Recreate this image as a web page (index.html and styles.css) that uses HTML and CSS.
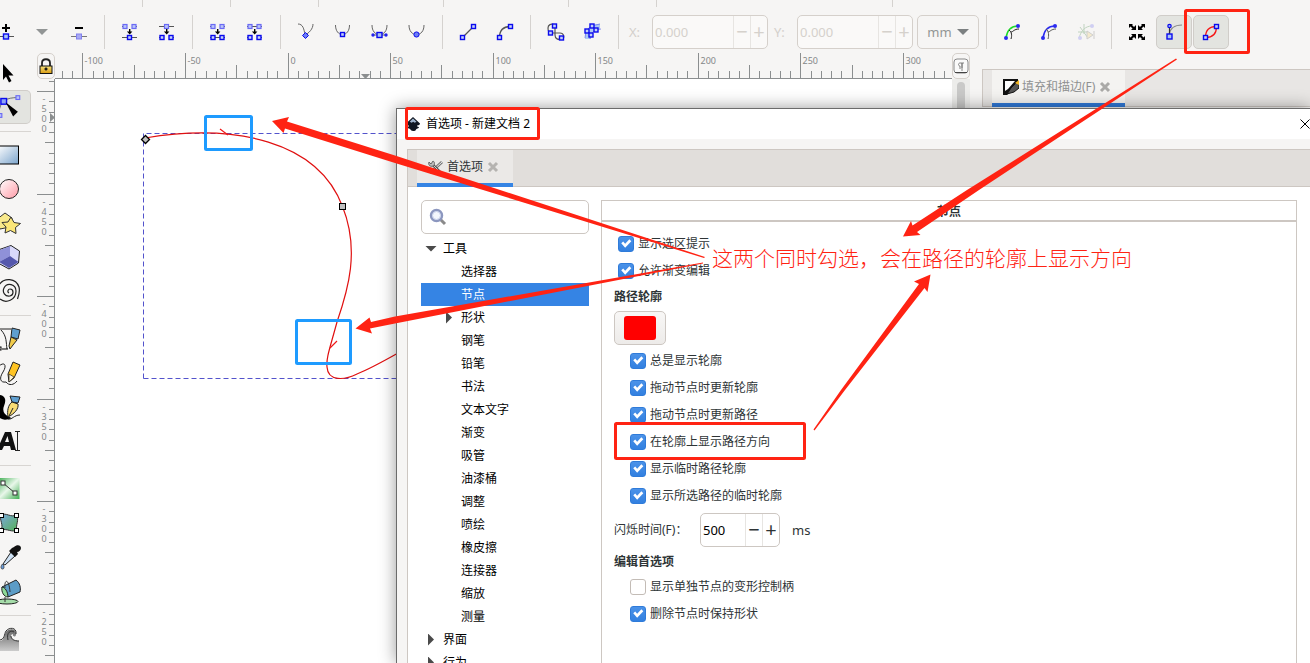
FILE: index.html
```
<!DOCTYPE html>
<html lang="zh-CN">
<head>
<meta charset="utf-8">
<title>首选项 - 新建文档 2</title>
<link rel="stylesheet" href="styles.css">
</head>
<body>
<svg class="symbols" aria-hidden="true">
  <defs>
    <g id="node"><rect x="-2" y="-2" width="4" height="4" fill="#c3d1f5" stroke="#0a0aee" stroke-width="1.4"/></g>
    <g id="node-big"><rect x="-2.5" y="-2.5" width="5" height="5" fill="#a9c3f5" stroke="#0a0aee" stroke-width="1.4"/></g>
    <g id="node-soft"><rect x="-2" y="-2" width="4" height="4" fill="#b9c4f7" stroke="#6a6af5" stroke-width="1.2"/></g>
    <g id="down"><path d="M-.5 -3h1.4v2.500h2L.2 2.600-2.600 -.5h2.100z" fill="#000"/></g>
    <linearGradient id="blue-fill" x2="1" y2="1"><stop stop-color="#fff"/><stop offset="1" stop-color="#7ba4cc"/></linearGradient>
    <linearGradient id="pink-fill" x2="1" y2="1"><stop stop-color="#fff"/><stop offset="1" stop-color="#ff9aa6"/></linearGradient>
    <linearGradient id="green-fill" x2="1" y2="1"><stop stop-color="#3fae52"/><stop offset=".5" stop-color="#e9f7ea"/><stop offset="1" stop-color="#3fae52"/></linearGradient>
    <linearGradient id="mesh-fill" x2="1" y2="1"><stop stop-color="#7aa7dc"/><stop offset="1" stop-color="#56b257"/></linearGradient>
    <linearGradient id="wave-fill" x2="0" y2="1"><stop stop-color="#666"/><stop offset="1" stop-color="#ccc"/></linearGradient>
    <linearGradient id="gold-fill" x2="0" y2="1"><stop stop-color="#f7e27c"/><stop offset="1" stop-color="#d89a10"/></linearGradient>
  </defs>
</svg>

<main class="app">
  <svg class="strip" aria-hidden="true"><path d="M142.500 0V7M230.500 0V7M318.500 0V7M443.500 0V7M568.500 0V7M656.500 0V7M892.500 0V7" stroke="#d5d2cf"/></svg>

  <div class="toolbar">
    <button class="tool" aria-label="插入节点"><svg viewBox="0 0 24 24"><path d="M9 8h8M13 4v8" stroke="#000" stroke-width="2"/><path d="M4 16.500h17" stroke="#555"/><use href="#node-big" x="13" y="16.500"/></svg></button>
    <button class="tool" aria-label="更多"><svg viewBox="0 0 24 24"><path d="M6 9h12l-6 6z" fill="#929595"/></svg></button>
    <button class="tool" aria-label="删除节点"><svg viewBox="0 0 24 24"><path d="M8 8h8" stroke="#000" stroke-width="2"/><path d="M4 16.500h16" stroke="#777"/><rect x="9.500" y="14" width="5" height="5" fill="#a9a9f3" stroke="#8181ef"/></svg></button>
    <i class="sep"></i>
    <button class="tool" aria-label="连接节点"><svg viewBox="0 0 24 24"><path d="M4 6.500h2M18 6.500h1M4 17.500h15" stroke="#555"/><use href="#node-soft" x="7" y="6.500"/><use href="#node-soft" x="16" y="6.500"/><use href="#down" x="11.500" y="12"/><use href="#node" x="11.500" y="17.500"/></svg></button>
    <button class="tool" aria-label="断开节点"><svg viewBox="0 0 24 24"><path d="M4 6.500h15M4 17.500h2M17 17.500h2" stroke="#555"/><use href="#node-soft" x="11.500" y="6.500"/><use href="#down" x="11.500" y="12"/><use href="#node" x="7" y="17.500"/><use href="#node" x="16" y="17.500"/></svg></button>
    <i class="sep"></i>
    <button class="tool" aria-label="用线段连接"><svg viewBox="0 0 24 24"><path d="M4 6.500h2M18 6.500h1M4 17.500h15" stroke="#555"/><use href="#node-soft" x="7" y="6.500"/><use href="#node-soft" x="16" y="6.500"/><use href="#down" x="11.500" y="12"/><use href="#node" x="7" y="17.500"/><use href="#node" x="16" y="17.500"/></svg></button>
    <button class="tool" aria-label="删除线段"><svg viewBox="0 0 24 24"><path d="M4 6.500h15M4 17.500h2M17 17.500h2" stroke="#555"/><use href="#node-soft" x="7" y="6.500"/><use href="#node-soft" x="16" y="6.500"/><use href="#down" x="11.500" y="12"/><use href="#node" x="7" y="17.500"/><use href="#node" x="16" y="17.500"/></svg></button>
    <i class="sep"></i>
    <button class="tool" aria-label="尖锐节点"><svg viewBox="0 0 24 24"><path d="M4 4c5 0 6 5 7 11 4-2 8-6 8-11" fill="none" stroke="#666"/><path d="M11.500 12.500l3 3-3 3-3-3z" fill="#6d7ff5" stroke="#0a0aee"/></svg></button>
    <button class="tool" aria-label="平滑节点"><svg viewBox="0 0 24 24"><path d="M4.500 5c0 6 3 9.500 7 9.500s7-3.500 7-9.500" fill="none" stroke="#666"/><use href="#node" x="11.500" y="14.500"/></svg></button>
    <button class="tool" aria-label="对称节点"><svg viewBox="0 0 24 24"><path d="M4 5c0 6 3 9.500 7.500 9.500S19 11 19 5M5 15h13" fill="none" stroke="#666"/><circle cx="5" cy="15" r="1.700" fill="#2222ee"/><circle cx="18" cy="15" r="1.700" fill="#2222ee"/><use href="#node-big" x="11.500" y="15"/></svg></button>
    <button class="tool" aria-label="自动平滑"><svg viewBox="0 0 24 24"><path d="M4 5c0 6 3 9.500 7.500 9.500S19 11 19 5" fill="none" stroke="#666"/><circle cx="11.500" cy="14.500" r="2.600" fill="#6d7ff5" stroke="#0a0aee"/></svg></button>
    <i class="sep"></i>
    <button class="tool" aria-label="直线段"><svg viewBox="0 0 24 24"><path d="M6.500 17.500l11-11" stroke="#555" stroke-width="1.300"/><use href="#node" x="6.500" y="17.500"/><use href="#node" x="17.500" y="6.500"/></svg></button>
    <button class="tool" aria-label="曲线段"><svg viewBox="0 0 24 24"><path d="M6.500 17.500c0-7 4-11 11-11" fill="none" stroke="#555" stroke-width="1.300"/><use href="#node" x="6.500" y="17.500"/><use href="#node" x="17.500" y="6.500"/></svg></button>
    <i class="sep"></i>
    <button class="tool" aria-label="对象转路径"><svg viewBox="0 0 24 24"><path d="M10.500 5C7 3 4 5 4 8c0 3 1 5 3 5h9c4 0 5 5 2 6-4 1-7 0-7-4V6" fill="none" stroke="#555" stroke-width="1.200"/><use href="#node" x="10.500" y="6"/><use href="#node" x="6.500" y="13"/><use href="#node" x="17.500" y="18"/></svg></button>
    <button class="tool" aria-label="描边转路径"><svg viewBox="0 0 24 24"><path d="M4 19C4 8 9 4 19 4v5c-6 0-9 4-9 10z" fill="#aec9f2"/><path d="M4 18l1-7 5-5 9-2M9 19v-4l5-5 6-1" fill="none" stroke="#6c77ee" stroke-width=".8"/><use href="#node" x="6" y="11"/><use href="#node" x="11" y="6"/><use href="#node" x="15" y="10"/><use href="#node" x="10" y="15"/></svg></button>
    <i class="sep"></i>
    <div class="coord"><label for="cx">X:</label><span class="entry"><input id="cx" value="0.000" disabled><button disabled aria-label="减少">−</button><button disabled aria-label="增加">+</button></span></div>
    <div class="coord"><label for="cy">Y:</label><span class="entry"><input id="cy" value="0.000" disabled><button disabled aria-label="减少">−</button><button disabled aria-label="增加">+</button></span></div>
    <button class="unit">mm<svg viewBox="0 0 12 7"><path d="M0 0h12L6 6z" fill="#7c8081"/></svg></button>
    <i class="sep"></i>
    <button class="tool" aria-label="下一个路径效果参数"><svg viewBox="0 0 24 24"><path d="M6 18C7 11 11 6 18 6" fill="none" stroke="#1edb2b" stroke-width="1.600"/><path d="M9 10c3 2 3 6 2 9M11 12c2 0 3-3 8-3" fill="none" stroke="#222"/><circle cx="6" cy="18" r="2" fill="#2b2bf0"/><circle cx="18" cy="6" r="2" fill="#2b2bf0"/></svg></button>
    <button class="tool" aria-label="编辑剪裁路径"><svg viewBox="0 0 24 24"><path d="M6 18C7 11 11 6 18 6" fill="none" stroke="#2b2bf0" stroke-width="1.600"/><path d="M9 9c3 2 3 7 2 10M11 12c2 0 3-3 8-3" fill="none" stroke="#555"/><circle cx="6" cy="18" r="2" fill="#2b2bf0"/><circle cx="18" cy="6" r="2" fill="#2b2bf0"/></svg></button>
    <button class="tool faded" aria-label="编辑蒙版"><svg viewBox="0 0 24 24"><path d="M5 18C7 11 11 6 18 6M6 7l8 11M10 4v10M4 12h10" fill="none" stroke="#4a8a4a"/><path d="M13 11l6 4-6 4z" fill="#f0d47a" stroke="#777"/><path d="M20 11v8" stroke="#777"/><circle cx="6" cy="18" r="2" fill="#7b7bf0"/><circle cx="18" cy="6" r="2" fill="#7b7bf0"/></svg></button>
    <i class="sep"></i>
    <button class="tool" aria-label="显示变换控制柄"><svg viewBox="0 0 24 24"><path d="M4 4h4L7 5l2 2 2-2v5H6l1.500-1.500-2-2L4 8zM20 4v4l-1.500-1.500-2 2L18 10h-5V5l2 2 2-2-1-1zM4 20v-4l1.500 1.500 2-2L6 14h5v5l-2-2-2 2 1 1zM20 20h-4l1-1-2-2-2 2v-5h5l-1.500 1.500 2 2L20 16z"/></svg></button>
    <button class="tool pressed" aria-label="显示贝塞尔手柄"><svg viewBox="0 0 24 24"><path d="M7 15C8 8 13 5 20 5" fill="none" stroke="#888" stroke-width="1.200"/><path d="M7.500 14V6" stroke="#333" stroke-width="1.200"/><circle cx="7.500" cy="6" r="1.700" fill="#9db4f7" stroke="#0a0aee" stroke-width="1.200"/><use href="#node-big" x="7.500" y="16.500"/></svg></button>
    <button class="tool pressed" aria-label="显示路径轮廓"><svg viewBox="0 0 24 24"><path d="M6.500 17.500C6.500 10 10 6.500 17.500 6.500 17.500 14 14 17.500 6.500 17.500z" fill="none" stroke="#f51414" stroke-width="1.300"/><use href="#node" x="6.500" y="17.500"/><use href="#node" x="17.500" y="6.500"/></svg></button>
  </div>

  <div class="workspace">
    <nav class="toolbox" aria-label="工具箱">
      <button aria-label="选择器"><svg viewBox="0 0 31 34"><path d="M3 8v16l3-3.500 3 6 2.500-1.500-3-5.500h5z" fill="#000"/></svg></button>
      <button class="active" aria-label="节点"><svg viewBox="0 0 31 34"><path d="M-2 23C-1 10 6 7 18 7" fill="none" stroke="#666"/><rect x="0" y="8" width="6" height="6" fill="#8ea5f5" stroke="#0a0aee" stroke-width="1.500"/><use href="#node-soft" x="18" y="7"/><use href="#node-soft" x="-1" y="26"/><path d="M5 12l13 10-5 5z" fill="#000"/></svg></button>
      <i></i>
      <button aria-label="矩形"><svg viewBox="0 0 31 34"><rect x="-3" y="8" width="21.500" height="18" fill="url(#blue-fill)" stroke="#000"/></svg></button>
      <button aria-label="椭圆"><svg viewBox="0 0 31 34"><circle cx="9" cy="17" r="9.500" fill="url(#pink-fill)" stroke="#222"/></svg></button>
      <button aria-label="星形"><svg viewBox="0 0 31 34"><path d="M5 7l7 5-2 9-10 2-4-9z" fill="#f8e98c" stroke="#333"/><path d="M11 11l3 5.500 6.500 1-5 4 .5 6-5.500-3-5.500 2.500 1-6-4-4.500 6-.5z" fill="#fbe678" stroke="#333"/></svg></button>
      <button aria-label="3D 立方体"><svg viewBox="0 0 31 34"><path d="M11 5.500l8.500 5.500-1 12-9.500 6-11-6V10z" fill="#d9d9fa" stroke="#222"/><path d="M0 10l10-4v10L-1 22z" fill="#8f91d8"/><path d="M10 16l8.500 6-9.500 6-10-6z" fill="#5558ac"/></svg></button>
      <button aria-label="螺旋"><svg viewBox="0 0 31 34"><path d="M9 19c-2-1-1-4 1-4 4 0 4 6 0 7-5 1-8-4-6-8 3-6 12-4 12 3 0 9-10 13-16 8M-1 11c5-8 17-7 20 2 1 4 0 8-1.500 12" fill="none" stroke="#222" stroke-width="1.200"/></svg></button>
      <i></i>
      <button aria-label="钢笔"><svg viewBox="0 0 31 34"><path d="M-1 7h12M1 8c6 6 5 13 6 19" fill="none" stroke="#222"/><rect x="-2" y="25" width="3" height="3" fill="#fff" stroke="#000"/><path d="M2 27h6" stroke="#000"/><path d="M12 6l8 2-2 9-7-2z" fill="#5f9fd0" stroke="#222"/><path d="M11 15l6 3-4 5-3 4-1-3z" fill="#f1cb4b" stroke="#222"/></svg></button>
      <button aria-label="铅笔"><svg viewBox="0 0 31 34"><path d="M-1 10c6-5 8 0 4 6s-3 11 3 10c3 4 8 3 11-1" fill="none" stroke="#222"/><path d="M13 6l7 3-6 13-5 4-1-8z" fill="#ffc423" stroke="#222"/><path d="M9 18l5 3-5 5z" fill="#fff3d1" stroke="#222" stroke-width=".7"/></svg></button>
      <button aria-label="书法"><svg viewBox="0 0 31 34"><path d="M0 6c5 1 5 5 3 10s0 9 6 12C2 30-1 27-1 23z" stroke="#000" stroke-width="2"/><path d="M10 6l10 1-2 6-6-1z" fill="#5f9fd0" stroke="#222"/><path d="M12 12l6 2c1 5-4 10-10 13-1-6 0-12 4-15z" fill="#f9dc74" stroke="#222"/><path d="M13 18l-4 8" stroke="#222"/><path d="M8 29c4 1 6-4 12-4" fill="none" stroke="#222"/></svg></button>
      <button aria-label="文本"><svg viewBox="0 0 31 34"><path d="M-3 26L5 8h6l5 18h-5l-1-4H4l-2 4zM5 18h4L7.500 12z" fill="#111" fill-rule="evenodd"/><path d="M15 7.500h5M15 26.500h5M17.500 8v18" stroke="#222"/></svg></button>
      <i></i>
      <button aria-label="渐变"><svg viewBox="0 0 31 34"><rect x="-2" y="6" width="21.500" height="21" fill="url(#green-fill)"/><path d="M3 11l12 10" stroke="#333"/><rect x="1" y="9" width="4" height="4" fill="#fff" stroke="#333"/><rect x="13" y="19" width="4" height="4" fill="#fff" stroke="#333"/></svg></button>
      <button aria-label="网格"><svg viewBox="0 0 31 34"><path d="M1 9c5-3 10 3 15 0 4 5-1 10 1 15-5 3-10-2-16 0 3-5-2-10 0-15z" fill="url(#mesh-fill)" stroke="#333"/><g fill="#fff" stroke="#000"><rect x="-.5" y="7.500" width="4" height="4"/><rect x="14.500" y="7.500" width="4" height="4"/><rect x="-.5" y="22.500" width="4" height="4"/><rect x="14.500" y="22.500" width="4" height="4"/></g></svg></button>
      <button aria-label="吸管"><svg viewBox="0 0 31 34"><path d="M11 12l4 4L5 25l-2-1z" fill="#cfe2f5" stroke="#222"/><path d="M14 7c3-3 7-2 7 1 0 2-2 4-4 4l1 2-3 3-6-6 3-3z" fill="#111"/><path d="M2.500 24c2 2 2 5 0 5s-2-3 0-5z" fill="#6b9edb" stroke="#222" stroke-width=".7"/></svg></button>
      <button aria-label="油漆桶"><svg viewBox="0 0 31 34"><ellipse cx="7" cy="27.500" rx="11" ry="2.500" fill="#a5dca9" stroke="#222"/><path d="M2 13l14-7c4 3 5 8 4 12L8 23c-3-3-5-6-6-10z" fill="#5c9cc6" stroke="#222"/><path d="M2 13c3 0 6 5 6 10-4 0-7-5-6-10z" fill="#8ed897" stroke="#222"/><path d="M5 14c-1-9 4-10 5 4M5 23v5" fill="none" stroke="#333"/></svg></button>
      <i></i>
      <button aria-label="调整"><svg viewBox="0 0 31 34"><path d="M-1 19c6 0 5-6 7-9 3-4 11-4 10 3-1 3-4 1-3-1-4 1-2 7 6 7v10H-1z" fill="url(#wave-fill)"/><path d="M-1 18c6 0 5-6 7-9 3-4 11-4 10 3M8 18c-2-8 3-10 6-8M11 14c0 3 3 5 8 5" fill="none" stroke="#333"/></svg></button>
    </nav>

    <button class="lock" aria-label="锁定参考线"><svg viewBox="0 0 16 20"><path d="M4 10V7c0-5 8-5 8 0v3" fill="none" stroke="#222" stroke-width="1.800"/><rect x="2" y="10" width="12" height="7.500" fill="url(#gold-fill)" stroke="#111"/><path d="M8 11.500v3M6.500 13h3" stroke="#111" stroke-width="1.500"/></svg></button>
    <svg class="ruler-h" id="ruler-h" aria-hidden="true"></svg>
    <button class="lock" aria-label="色彩管理"><svg viewBox="0 0 16 20"><rect x="1" y="3" width="14" height="14" rx="3" fill="#fafafa" stroke="#888"/><path d="M2 16.500h12" stroke="#444"/><path d="M9 12V7H7c-2 0-2 3 0 3v3M11 7H9v8" fill="none" stroke="#777" stroke-width=".9"/></svg></button>
    <svg class="ruler-v" id="ruler-v" aria-hidden="true"></svg>
    <div class="canvas">
      <svg aria-label="路径">
        <g transform="translate(-55 -79)" fill="none">
          <path d="M143.500 378.500V133.500H500M143.500 378.500H500" stroke="#5353cc" stroke-dasharray="5 3"/>
          <path d="M145 138C235 123 318 141 342.500 206.500C360 250 348 290 337 322C330 348 326 358 327 367C328 382 345 380 357 374C370 369 384 361 400 352" stroke="#e01010" stroke-width="1.200"/>
          <path d="M220 129l8 6M337 341l-7 7" stroke="#f01818" stroke-width="1.200"/>
          <path d="M145.500 135.500l4 4-4 4-4-4z" fill="#bfbfbf" stroke="#000" stroke-width="1.300"/>
          <rect x="339.500" y="203.500" width="6" height="6" fill="#bfbfbf" stroke="#000"/>
        </g>
      </svg>
    </div>
    <div class="scrollbar"><i></i></div>
    <aside class="dock">
      <div class="tabs">
        <div class="tab"><svg class="tab-icon" viewBox="0 0 16 16"><path d="M0 0h15v5L4 16H0z" fill="#111"/><path d="M2 2h10l-7 8-3 2z" fill="#fff"/><path d="M14 3l2 2v4l-5 4-7 2 4-6z" fill="#555" stroke="#111"/><path d="M12 4l4-3v5z" fill="#f2b622"/></svg><span>填充和描边(F)</span><svg class="close" viewBox="0 0 12 12"><path d="M2 2l8 8M10 2l-8 8" stroke="#aaa9a7" stroke-width="3"/></svg></div>
      </div>
    </aside>
  </div>
</main>

<section class="dialog" role="dialog" aria-labelledby="dialog-title">
  <header class="titlebar">
    <svg class="logo" viewBox="0 0 14 14"><path d="M7 0l7 6.500c0 2-3 1.500-3 2.500s2 .5 2 1.500-3 1-3 2-1.500 1.500-3 1.500-2-1-3-2-3-.5-3-1.500 2-.5 2-1.500S0 8.500 0 6.500z" fill="#111722"/><path d="M7 1.500l3.500 3.300-1.800 1-1.500-1-1.500 1-2-1z" fill="#9fb4cd"/></svg>
    <h1 id="dialog-title">首选项 - 新建文档 2</h1>
    <button class="win-close" aria-label="关闭"><svg viewBox="0 0 10 10"><path d="M.5 .5l9 9M9.500 .5l-9 9" stroke="#000"/></svg></button>
  </header>
  <div class="notebook">
    <div class="tabs">
      <div class="tab"><svg class="tab-icon" viewBox="0 0 16 16"><path d="M2 14L14 3" stroke="#777" stroke-width="3"/><path d="M2 14L14 3" stroke="#e8e8e8"/><path d="M5 6l8 8" stroke="#555" stroke-width="2.500"/><path d="M5 6l8 8" stroke="#ccc"/><path d="M1 3l2 2 2-3c2 1 2 4 0 5-3 1-5-1-4-4z" fill="#bbb" stroke="#666"/></svg><span>首选项</span><svg class="close" viewBox="0 0 12 12"><path d="M2 2l8 8M10 2l-8 8" stroke="#b5b3b0" stroke-width="3"/></svg></div>
    </div>
    <div class="page">
      <div class="side">
        <label class="search"><svg viewBox="0 0 18 18"><path d="M11 11l5 5" stroke="#8a8a8a" stroke-width="3"/><circle cx="7.500" cy="7.500" r="5.500" fill="#f4f7fd" stroke="#8c97bf" stroke-width="2.500"/><circle cx="7.500" cy="7.500" r="4" fill="none" stroke="#c9d2ec"/></svg><input type="text" aria-label="搜索"></label>
        <ul class="tree">
          <li><i class="open"></i>工具</li>
          <li class="child">选择器</li>
          <li class="child selected">节点</li>
          <li class="child"><i class="shut"></i>形状</li>
          <li class="child">钢笔</li>
          <li class="child">铅笔</li>
          <li class="child">书法</li>
          <li class="child">文本文字</li>
          <li class="child">渐变</li>
          <li class="child">吸管</li>
          <li class="child">油漆桶</li>
          <li class="child">调整</li>
          <li class="child">喷绘</li>
          <li class="child">橡皮擦</li>
          <li class="child">连接器</li>
          <li class="child">缩放</li>
          <li class="child">测量</li>
          <li><i class="shut"></i>界面</li>
          <li><i class="shut"></i>行为</li>
        </ul>
      </div>
      <div class="panel">
        <h2>节点</h2>
        <form class="settings">
          <label class="check outer"><input type="checkbox" checked>显示选区提示</label>
          <label class="check outer"><input type="checkbox" checked>允许渐变编辑</label>
          <h3>路径轮廓</h3>
          <button type="button" class="color" aria-label="轮廓颜色"><span></span></button>
          <label class="check"><input type="checkbox" checked>总是显示轮廓</label>
          <label class="check"><input type="checkbox" checked>拖动节点时更新轮廓</label>
          <label class="check"><input type="checkbox" checked>拖动节点时更新路径</label>
          <label class="check"><input type="checkbox" checked>在轮廓上显示路径方向</label>
          <label class="check"><input type="checkbox" checked>显示临时路径轮廓</label>
          <label class="check"><input type="checkbox" checked>显示所选路径的临时轮廓</label>
          <div class="flash"><label for="flash">闪烁时间(F)：</label><span class="entry small"><input id="flash" value="500"><button type="button" aria-label="减少">−</button><button type="button" aria-label="增加">+</button></span><span class="ms">ms</span></div>
          <h3>编辑首选项</h3>
          <label class="check"><input type="checkbox">显示单独节点的变形控制柄</label>
          <label class="check"><input type="checkbox" checked>删除节点时保持形状</label>
        </form>
      </div>
    </div>
  </div>
</section>

<svg class="notes" aria-hidden="true">
  <g fill="#ff2313">
    <path d="M272 121L289 117 287 121.500 395 155.500 705 257 704 258 395 163 285 128.500 283.500 133z"/>
    <path d="M355.500 328.500L369.500 317.500 371 322 395 316.500 703 262.500 703 263.500 395 323.500 370 328.500 372 333.500z"/>
    <path d="M903 236.500L911 221 912.500 225.500 967 190 1176 58.500 1177 59.500 979 190 917 232 920.500 235z"/>
    <path d="M930.500 274.500L914 281.500 919 284 841 390 813.500 429.500 814.500 430.500 845 390 924.500 288 927.500 292z"/>
  </g>
  <g fill="none" stroke="#ff2313" stroke-width="3">
    <rect x="406.500" y="108.500" width="132" height="30" rx="1"/>
    <rect x="1185.500" y="10.500" width="63" height="42" rx="1"/>
    <rect x="615.500" y="423.500" width="189" height="35" rx="1"/>
  </g>
  <g fill="none" stroke="#1e9bff" stroke-width="3">
    <rect x="205.500" y="116.500" width="46" height="33" rx="1"/>
    <rect x="296.500" y="320.500" width="54" height="43" rx="1"/>
  </g>
</svg>
<p class="note-text">这两个同时勾选，会在路径的轮廓上显示方向</p>
<script src="rulers.js"></script>
</body>
</html>
```

FILE: rulers.js
```
const NS = "http://www.w3.org/2000/svg";
const STEP = 10.255;

function add(parent, name, attrs, text) {
  const el = document.createElementNS(NS, name);
  for (const key in attrs) el.setAttribute(key, attrs[key]);
  if (text) el.textContent = text;
  parent.appendChild(el);
}

function tickSize(i) {
  if (i % 10 === 0) return 26;
  return i % 5 === 0 ? 14 : 8;
}

const h = document.getElementById("ruler-h");
for (let i = -22; i < 65; i++) {
  const x = Math.floor(233.05 + i * STEP) + 0.5;
  add(h, "path", { d: `M${x} 27v-${tickSize(i)}` });
  if (i % 10 === 0) add(h, "text", { x: x + 2, y: 12 }, String(i * 5));
}
add(h, "path", { d: "M0 26.5H2000" });
add(h, "path", { class: "mark", d: "M306 22h9l-4.500 5z" });

const v = document.getElementById("ruler-v");
for (let i = -3; i < 57; i++) {
  const y = Math.floor(12.5 + i * STEP) + 0.5;
  const size = i % 10 === 0 ? 18 : i % 5 === 0 ? 10 : 6;
  add(v, "path", { d: `M18 ${y}h-${size}` });
  if (i % 10 === 0) {
    [...String(-500 + i * 5)].forEach((ch, n) =>
      add(v, "text", { x: 7, y: y + 10 + n * 10, "text-anchor": "middle" }, ch));
  }
}
add(v, "path", { d: "M17.500 0V2000" });
add(v, "path", { class: "mark", d: "M13 34v9l5-4.500z" });
```

FILE: styles.css
```
* { box-sizing: border-box; }
body {
  margin: 0;
  height: 100vh;
  overflow: hidden;
  position: relative;
  background: #f6f5f4;
  color: #2e3436;
  font: 12px/16px "Noto Sans", "Noto Sans CJK SC", sans-serif;
}
button, input { font: inherit; color: inherit; margin: 0; padding: 0; border: 0; background: none; }
input { outline: 0; min-width: 0; }
h1, h2, h3, p, ul { margin: 0; padding: 0; font-size: 12px; }
svg { display: block; flex: none; }
.symbols { position: absolute; width: 0; height: 0; }

.app { height: 100vh; display: flex; flex-direction: column; }
.strip { width: 100%; height: 7px; }

.toolbar {
  display: flex;
  flex: none;
  gap: 1px;
  height: 34px;
  margin: 8px 0 3px -13px;
}
.tool {
  flex: none;
  width: 36px;
  display: flex;
  align-items: center;
  justify-content: center;
  border: 1px solid transparent;
  border-radius: 5px;
}
.tool svg { width: 24px; height: 24px; }
.tool.pressed { background: #e3e4e0; border-color: #d0cdc9; }
.tool.faded { opacity: 0.3; }
.sep { flex: none; width: 1px; margin: 0 6px; background: #d5d2cf; }
.coord { flex: none; display: flex; align-items: center; color: #d3cfcb; font-size: 13px; }
.coord label { width: 26px; padding-left: 3px; }
.coord + .coord { margin-left: 2px; }
.unit { margin-left: 3px; }
.entry {
  display: flex;
  width: 116px;
  height: 34px;
  border: 1px solid #d5d0cb;
  border-radius: 5px;
  background: #faf9f8;
  font-size: 13px;
}
.entry input { flex: 1; padding-left: 2px; }
.entry input:disabled, .entry button:disabled { color: #d5d1cc; }
.entry button { width: 17px; border-left: 1px solid #e7e5e2; font-size: 20px; line-height: 30px; }
.entry.small { width: 80px; border-color: #cdc7c2; background: #fff; }
.entry.small input { color: #000; }
.unit {
  flex: none;
  width: 62px;
  display: flex;
  align-items: center;
  justify-content: center;
  gap: 5px;
  border: 1px solid #d5d0cb;
  border-radius: 5px;
  color: #929595;
  font-size: 13px;
}
.unit svg { width: 12px; height: 7px; }

.workspace {
  flex: 1;
  min-height: 0;
  display: grid;
  grid-template-columns: 37px 18px 1fr 18px 340px;
  grid-template-rows: 27px 1fr;
}
.toolbox { grid-row: 1 / 3; padding-top: 4px; width: 31px; overflow: hidden; }
.toolbox button { display: block; width: 31px; height: 34px; }
.toolbox button svg { width: 31px; height: 34px; }
.toolbox .active { background: #e3e4e0; border: 1px solid #d0cdc9; border-left: 0; border-radius: 0 5px 5px 0; }
.toolbox .active svg { height: 32px; }
.toolbox i { display: block; height: 1px; margin: 7px 0 6px; background: #d8d5d2; }
.lock { margin-top: 1px; border: 1px solid #d5d0cb; border-radius: 5px; }
.lock svg { width: 16px; height: 22px; }
.ruler-h { width: 100%; height: 27px; stroke: #8b8e8f; }
.ruler-v { width: 18px; height: 100%; stroke: #8b8e8f; }
.ruler-h text, .ruler-v text { stroke: none; fill: #858889; font-size: 9px; }
.ruler-h .mark, .ruler-v .mark { fill: #8b8e8f; stroke: none; }
.canvas { background: #fff; min-width: 0; min-height: 0; }
.canvas svg { width: 100%; height: 100%; }
.scrollbar { background: #ececea; padding: 3px 5px; }
.scrollbar i { display: block; width: 8px; height: 100%; border-radius: 4px; background: #c9c9c8; }

.tabs { display: flex; height: 38px; border: 1px solid #cdc7c2; background: #e1dedb; padding-left: 9px; }
.tab {
  display: flex;
  align-items: center;
  gap: 3px;
  margin-bottom: -1px;
  padding: 1px 14px 0 11px;
  border-bottom: 4px solid #3584e4;
  background: #ebe9e7;
}
.tab-icon { width: 16px; height: 16px; }
.close { width: 12px; height: 12px; margin-left: 1px; }
.dock { grid-column: 5; grid-row: 1 / 3; margin: 17px 0 0 12px; color: #8f9192; }
.dock .tabs { background: #e8e6e4; border-right: 0; }
.dock .tab { background: #f4f3f1; border-bottom-color: #3079d8; }

.dialog {
  position: absolute;
  left: 396px;
  top: 108px;
  right: 0;
  bottom: 0;
  display: flex;
  flex-direction: column;
  border: solid #6b6b6b;
  border-width: 1px 0 0 1px;
  background: #f6f5f4;
  box-shadow: 0 0 16px rgba(0, 0, 0, 0.4);
}
.titlebar { flex: none; display: flex; align-items: center; height: 30px; padding-left: 9px; background: #fff; color: #000; }
.logo { width: 14px; height: 14px; }
h1 { flex: 1; padding-left: 6px; font-weight: 400; }
.win-close svg { width: 10px; height: 10px; }
.notebook { flex: 1; min-height: 0; display: flex; flex-direction: column; margin: 10px 0 0 10px; }
.notebook .tabs { flex: none; border-right: 0; }
.page {
  flex: 1;
  min-height: 0;
  display: flex;
  gap: 12px;
  padding: 13px 13px 0;
  border-left: 1px solid #cdc7c2;
  background: #fff;
}
.side { flex: none; width: 168px; }
.search { display: flex; align-items: center; height: 34px; padding-left: 7px; border: 1px solid #cdc7c2; border-radius: 5px; }
.search svg { width: 18px; height: 18px; }
.search input { flex: 1; }
.tree { margin-top: 3px; list-style: none; color: #000; }
.tree li { display: flex; align-items: center; height: 23px; }
.tree li:not(.child) { padding-left: 4px; }
.tree i { width: 18px; flex: none; }
.tree i::before { content: ""; display: block; background: #4a4a4a; }
.tree .open::before { width: 12px; height: 6px; clip-path: polygon(0 0, 100% 0, 50% 100%); }
.tree .shut::before { width: 6px; height: 12px; margin-left: 3px; clip-path: polygon(0 0, 100% 50%, 0 100%); }
.tree .child { padding-left: 40px; }
.tree .child:has(.shut) { padding-left: 22px; }
.tree .selected { background: #3584e4; color: #fff; }

.panel { flex: 1; border: 1px solid #cdc7c2; border-bottom: 0; }
h2 { height: 21px; border-bottom: 2px solid #cdc7c2; line-height: 22px; text-align: center; }
.settings { padding: 8px 12px 0; }
.check { display: flex; align-items: center; gap: 4px; height: 27px; padding-left: 16px; }
.check.outer { padding-left: 4px; }
.check input {
  appearance: none;
  flex: none;
  width: 16px;
  height: 16px;
  border: 1px solid #c3bcb6;
  border-radius: 3px;
  background: #fff;
}
.check input:checked { border-color: #2f7bd9; background: linear-gradient(#4b92e8, #3280e0); }
.check input:checked::before {
  content: "";
  display: block;
  width: 14px;
  height: 14px;
  background: #fff;
  clip-path: polygon(16% 48%, 30% 36%, 44% 52%, 74% 20%, 88% 34%, 44% 80%);
}
h3 { height: 24px; line-height: 26px; }
.color {
  display: flex;
  align-items: center;
  justify-content: center;
  width: 52px;
  height: 34px;
  margin: 3px 0 2px;
  border: 1px solid #cdc7c2;
  border-radius: 5px;
  background: linear-gradient(#f8f7f6, #edebe9);
}
.color span { width: 32px; height: 24px; border-radius: 3px; background: #f00; }
.flash { display: flex; align-items: center; margin: 4px 0 2px; }
.flash label { width: 86px; }
.ms { padding-left: 12px; font-size: 13px; }

.notes { position: absolute; left: 0; top: 0; width: 100%; height: 100%; pointer-events: none; }
.note-text {
  position: absolute;
  left: 712px;
  top: 242px;
  color: #ff2313;
  font: 300 21px/30px "Noto Sans CJK SC", sans-serif;
  white-space: nowrap;
}
```
